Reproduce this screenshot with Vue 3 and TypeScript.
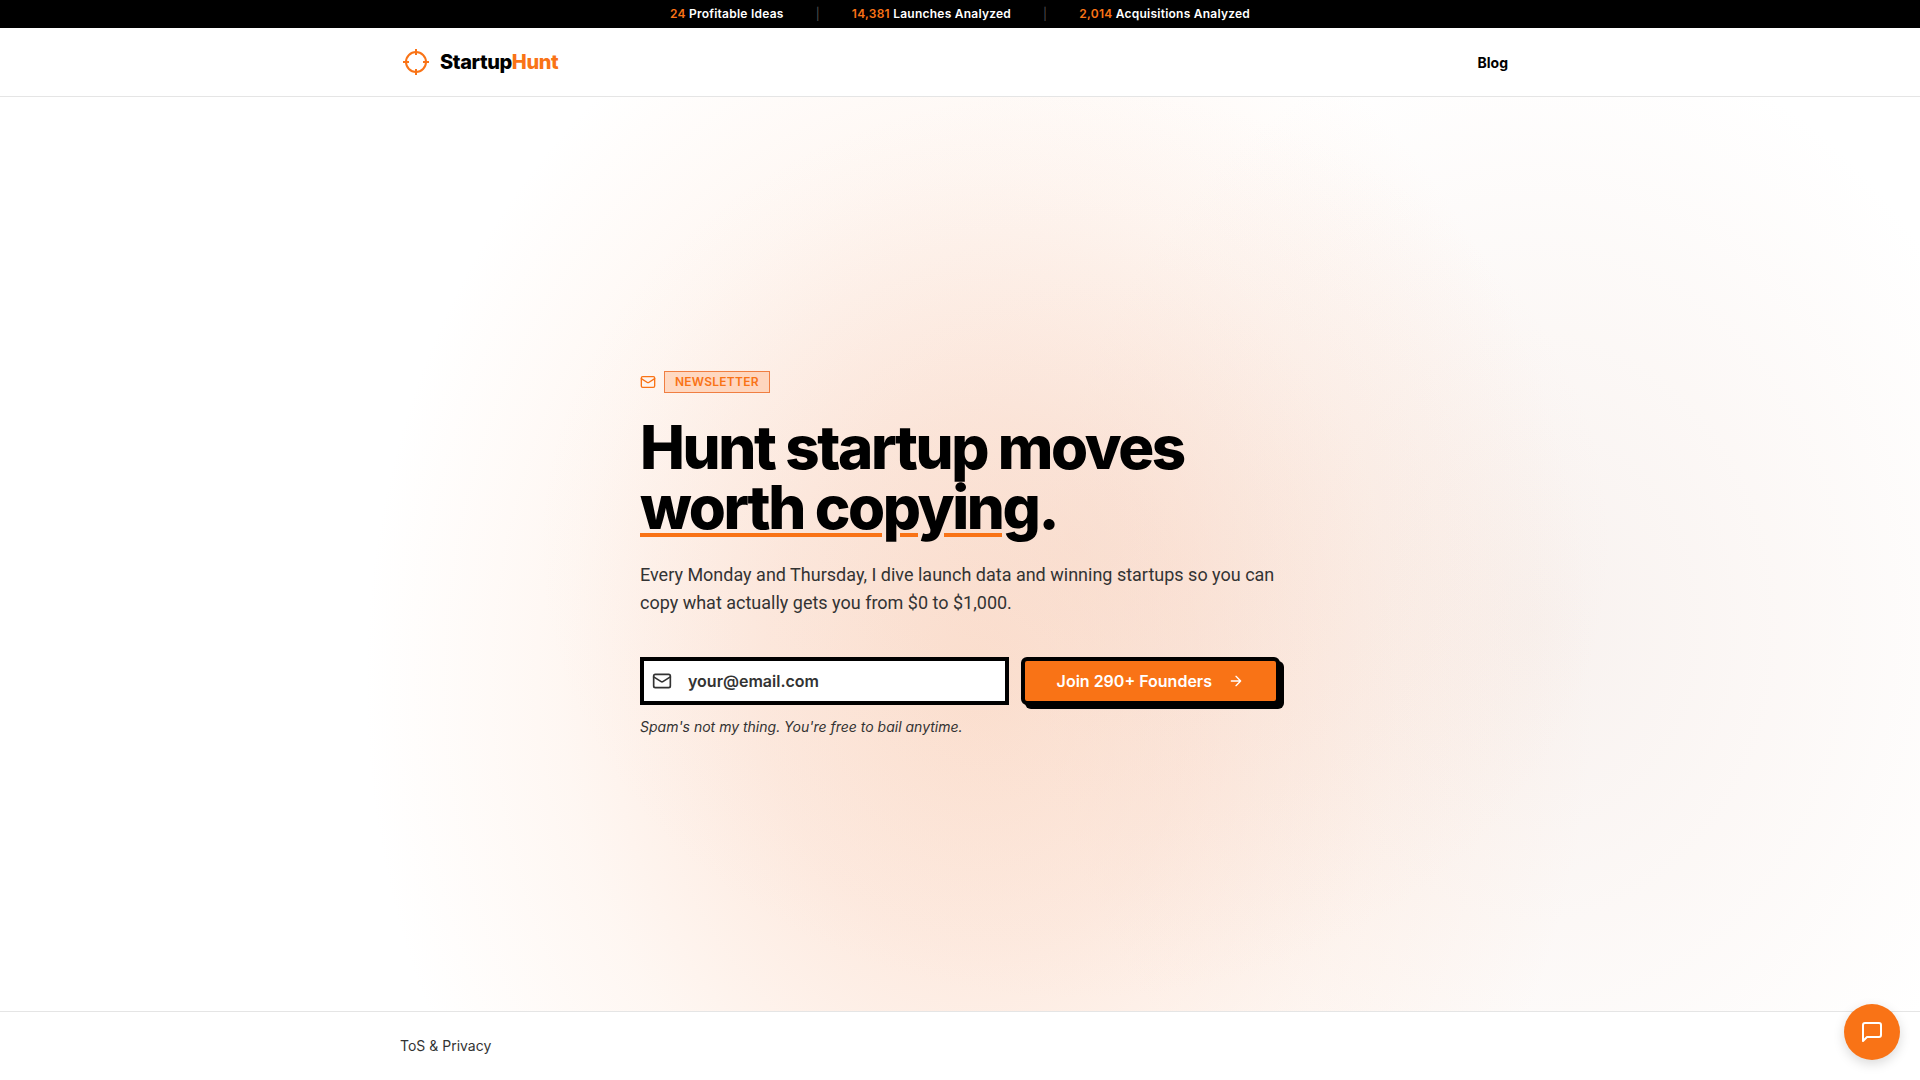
<script setup lang="ts">
import { ref } from 'vue'

interface Stat {
  value: string
  label: string
}

const stats: Stat[] = [
  { value: '24', label: 'Profitable Ideas' },
  { value: '14,381', label: 'Launches Analyzed' },
  { value: '2,014', label: 'Acquisitions Analyzed' },
]

const email = ref('')
</script>

<template>
  <div class="page">
    <div class="stats">
      <template v-for="(stat, i) in stats" :key="stat.label">
        <span v-if="i > 0" class="divider" aria-hidden="true">|</span>
        <span class="stat"><span class="accent">{{ stat.value }}</span> {{ stat.label }}</span>
      </template>
    </div>

    <header class="header">
      <div class="container header-row">
        <a href="#" class="brand">
          <svg width="32" height="32" viewBox="0 0 32 32" fill="none" stroke="currentColor" stroke-width="2" aria-hidden="true">
            <circle cx="16" cy="16" r="10" />
            <path d="M16 3v6M16 23v6M3 16h6M23 16h6" />
          </svg>
          <span>Startup<span class="accent">Hunt</span></span>
        </a>
        <nav>
          <a href="#" class="nav-link">Blog</a>
        </nav>
      </div>
    </header>

    <main class="hero">
      <section class="content">
        <div class="tag-row">
          <svg class="accent" width="16" height="16" viewBox="0 0 24 24" fill="none" stroke="currentColor" stroke-width="2" stroke-linecap="round" stroke-linejoin="round" aria-hidden="true">
            <rect x="2" y="4" width="20" height="16" rx="2" />
            <path d="m22 7-8.97 5.7a1.94 1.94 0 0 1-2.06 0L2 7" />
          </svg>
          <span class="tag">NEWSLETTER</span>
        </div>

        <h1>Hunt startup moves<br /><span class="underlined">worth copying</span>.</h1>

        <p class="lead">
          Every Monday and Thursday, I dive launch data and winning startups so you can
          copy what actually gets you from $0 to $1,000.
        </p>

        <form class="signup" @submit.prevent>
          <label class="field">
            <svg width="20" height="20" viewBox="0 0 24 24" fill="none" stroke="currentColor" stroke-width="2" stroke-linecap="round" stroke-linejoin="round" aria-hidden="true">
              <rect x="2" y="4" width="20" height="16" rx="2" />
              <path d="m22 7-8.97 5.7a1.94 1.94 0 0 1-2.06 0L2 7" />
            </svg>
            <input v-model="email" type="email" placeholder="your@email.com" aria-label="Email address" />
          </label>
          <button type="submit" class="join">
            Join 290+ Founders
            <svg width="16" height="16" viewBox="0 0 24 24" fill="none" stroke="currentColor" stroke-width="2" stroke-linecap="round" stroke-linejoin="round" aria-hidden="true">
              <path d="M5 12h14M12 5l7 7-7 7" />
            </svg>
          </button>
        </form>

        <p class="note">Spam's not my thing. You're free to bail anytime.</p>
      </section>
    </main>

    <footer class="footer">
      <div class="container">
        <a href="#">ToS &amp; Privacy</a>
      </div>
    </footer>

    <button type="button" class="chat" aria-label="Open chat">
      <svg width="24" height="24" viewBox="0 0 24 24" fill="none" stroke="currentColor" stroke-width="2" stroke-linecap="round" stroke-linejoin="round" aria-hidden="true">
        <path d="M21 15a2 2 0 0 1-2 2H7l-4 4V5a2 2 0 0 1 2-2h14a2 2 0 0 1 2 2z" />
      </svg>
    </button>
  </div>
</template>

<style>
body {
  margin: 0;
  background: #fff;
}
</style>

<style scoped>
.page {
  min-height: 100vh;
  display: flex;
  flex-direction: column;
  font-family: Inter, 'Liberation Sans', sans-serif;
  color: #000;
}

.page *,
.page *::before {
  box-sizing: border-box;
}

a {
  color: inherit;
  text-decoration: none;
}

svg {
  display: block;
  flex: none;
}

.accent {
  color: #f97316;
}

.container {
  max-width: 1152px;
  margin: 0 auto;
  padding: 0 16px;
}

.stats {
  display: flex;
  justify-content: center;
  gap: 32px;
  padding: 6px 16px;
  background: #000;
  color: #fff;
  font-size: 12px;
  line-height: 16px;
  font-weight: 600;
  letter-spacing: 0.02em;
}

.divider {
  color: #525252;
  font-weight: 400;
}

.header {
  background: #fff;
  border-bottom: 1px solid #e5e5e5;
}

.header-row {
  height: 68px;
  display: flex;
  align-items: center;
  justify-content: space-between;
}

.brand {
  display: flex;
  align-items: center;
  gap: 8px;
  font-size: 20px;
  line-height: 28px;
  font-weight: 800;
  letter-spacing: -0.02em;
}

.brand svg {
  color: #f97316;
}

.nav-link {
  padding: 8px 12px;
  font-size: 14px;
  line-height: 20px;
  font-weight: 700;
}

.hero {
  flex: 1;
  display: flex;
  align-items: center;
  justify-content: center;
  padding: 48px 16px;
  background:
    radial-gradient(ellipse 28% 50% at 56% 49%, rgba(240, 195, 175, 0.24), rgba(240, 195, 175, 0.1) 50%, rgba(240, 195, 175, 0)),
    radial-gradient(ellipse 32% 82% at 51% 64%, rgba(250, 200, 170, 0.52), rgba(250, 205, 180, 0.42) 35%, rgba(252, 215, 192, 0.2) 68%, rgba(255, 235, 220, 0)),
    radial-gradient(ellipse 26% 66% at 80% 58%, rgba(240, 226, 220, 0.46), rgba(245, 232, 226, 0.3) 50%, rgba(250, 245, 240, 0)),
    #fff;
}

.content {
  width: 100%;
  max-width: 640px;
}

.tag-row {
  display: flex;
  align-items: center;
  gap: 8px;
  margin-bottom: 24px;
}

.tag {
  padding: 2px 10px;
  border: 1px solid rgba(234, 88, 12, 0.7);
  background: rgba(255, 190, 150, 0.5);
  color: #f97316;
  font-size: 12px;
  line-height: 16px;
  font-weight: 600;
  letter-spacing: 0.02em;
}

h1 {
  margin: 0 0 24px;
  font-size: 60px;
  line-height: 60px;
  font-weight: 800;
  letter-spacing: -0.04em;
}

.underlined {
  text-decoration: underline;
  text-decoration-color: #f97316;
  text-decoration-thickness: 4px;
  text-underline-offset: 4px;
}

.lead {
  margin: 0 0 40px;
  color: #333;
  font-family: Roboto, Inter, sans-serif;
  font-size: 18px;
  line-height: 28px;
}

.signup {
  display: flex;
  gap: 12px;
  margin-bottom: 12px;
}

.field {
  flex: 1;
  min-width: 0;
  height: 48px;
  display: flex;
  align-items: center;
  gap: 16px;
  padding: 0 8px;
  border: 4px solid #000;
  background: #fff;
  color: #333;
}

.field input {
  flex: 1;
  min-width: 0;
  padding: 0;
  border: 0;
  outline: 0;
  background: transparent;
  color: #000;
  font: 600 16px/24px Inter, 'Liberation Sans', sans-serif;
}

.field input::placeholder {
  color: #333;
  opacity: 1;
}

.join {
  display: flex;
  align-items: center;
  gap: 16px;
  height: 48px;
  padding: 0 32px;
  border: 4px solid #000;
  border-radius: 6px;
  background: #f97316;
  box-shadow: 4px 4px 0 #000;
  color: #fff;
  font: 600 16px/24px Inter, 'Liberation Sans', sans-serif;
  white-space: nowrap;
}

.note {
  margin: 0;
  color: #333;
  font-size: 14px;
  line-height: 20px;
  font-style: italic;
}

.footer {
  padding: 24px 0;
  border-top: 1px solid #e5e5e5;
  background: #fff;
  color: #333;
  font-size: 14px;
  line-height: 20px;
}

.chat {
  position: fixed;
  right: 20px;
  bottom: 20px;
  width: 56px;
  height: 56px;
  display: flex;
  align-items: center;
  justify-content: center;
  padding: 0;
  border: 0;
  border-radius: 50%;
  background: #f97316;
  box-shadow: 0 4px 12px rgba(0, 0, 0, 0.15);
  color: #fff;
}
</style>
